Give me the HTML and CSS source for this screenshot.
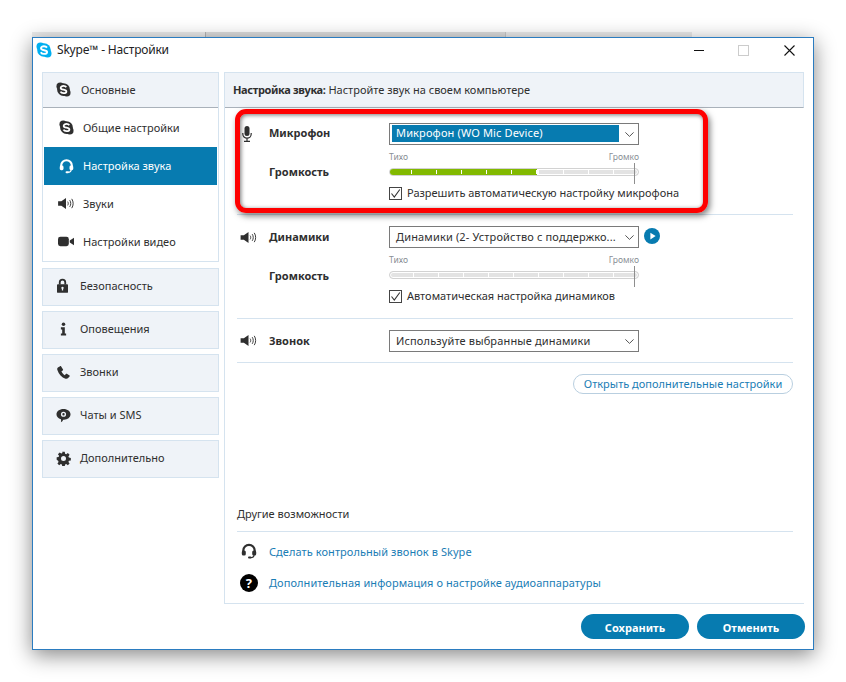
FILE: index.html
```html
<!DOCTYPE html>
<html lang="ru">
<head>
    <meta charset="UTF-8">
    <title>Skype - Настройки</title>
    <link rel="stylesheet" href="styles.css">
</head>
<body>
    <svg class="defs" width="0" height="0">
        <symbol id="i-skype" viewBox="0 0 16 16">
            <circle cx="4.5" cy="4.5" r="4"/>
            <circle cx="11.5" cy="11.5" r="4"/>
            <circle cx="8" cy="8" r="6.8"/>
            <path d="M11 5.6C10.3 4.6 9.2 4.2 8 4.2 6.4 4.2 5 5 5 6.3 5 9 11.1 7.4 11.1 10 11.1 11.2 9.700 11.900 8 11.900 6.600 11.900 5.400 11.300 4.800 10.200" fill="none" stroke="var(--s, #fff)" stroke-width="1.9"/>
        </symbol>
        <symbol id="i-headset" viewBox="0 0 16 16">
            <path d="M2.300 9.500V7.500a5.700 5.700 0 0 1 11.400 0v2" fill="none" stroke="currentColor" stroke-width="2.200"/>
            <rect x="0.800" y="7.500" width="4" height="5" rx="1.500"/>
            <rect x="11.200" y="7.500" width="4" height="5" rx="1.500"/>
            <path d="M13 12c0 1.800-1.500 2.700-3.500 2.700" fill="none" stroke="currentColor" stroke-width="1.200"/>
            <rect x="7" y="13.600" width="3.500" height="2" rx="1"/>
        </symbol>
        <symbol id="i-speaker" viewBox="0 0 17 14">
            <path d="M0 4.500h3.500L8.500 1v12L3.500 9.500H0z"/>
            <path d="M10.300 5c.8 1.200.8 2.800 0 4M12.500 3.400c1.500 2.100 1.500 5.100 0 7.200M14.700 2c2 3 2 7 0 10" fill="none" stroke="currentColor" stroke-width="1"/>
        </symbol>
        <symbol id="i-video" viewBox="0 0 17 11">
            <rect x="0" y="0.500" width="11.500" height="10" rx="2.500"/>
            <path d="M12.500 4.500 17 1.500v8l-4.500-3z"/>
        </symbol>
        <symbol id="i-lock" viewBox="0 0 12 16">
            <path d="M3 7V4.500a3 3 0 0 1 6 0V7" fill="none" stroke="currentColor" stroke-width="2"/>
            <path d="M1 6.500h10a1 1 0 0 1 1 1V15a1 1 0 0 1-1 1H1a1 1 0 0 1-1-1V7.500a1 1 0 0 1 1-1zM6 9.300a1.300 1.300 0 0 0-.7 2.400V13.500h1.400v-1.800A1.300 1.300 0 0 0 6 9.300z" fill-rule="evenodd"/>
        </symbol>
        <symbol id="i-info" viewBox="0 0 8 15">
            <circle cx="4" cy="2" r="2"/>
            <path d="M1 5.500h4.500V12.500H7V15H1v-2.500h1.500V8H1z"/>
        </symbol>
        <symbol id="i-phone" viewBox="0 0 14 14">
            <path d="M3.300.3 1 1.600C.2 2.200.1 3.300.4 4.300c1.500 4.700 4.600 8 8.800 9.300 1 .3 2 .2 2.800-.6l1.700-1.900c.3-.4.200-.8-.2-1L10.600 8.400c-.4-.2-.8-.2-1.100.2L8.400 9.900c-1.500-.7-3-2.500-3.600-4.200l1.400-.9c.4-.3.5-.7.300-1.100L4.500.6C4.200.1 3.700 0 3.300.3z"/>
        </symbol>
        <symbol id="i-chat" viewBox="0 0 16 16">
            <path d="M8 1c4.300 0 7.500 2.500 7.500 5.700 0 3.300-3.200 5.800-7 5.800-.3 0-.5 0-.8 0-.4 1-1.200 2-2.500 2.800.3-1 .3-2 .1-3.200C2.300 11.200.5 9.200.5 6.700.5 3.500 3.700 1 8 1z"/>
            <circle cx="8" cy="6.700" r="2" fill="none" stroke="#eff3f8" stroke-width="1.500"/>
        </symbol>
        <symbol id="i-gear" viewBox="-1 -1 18 18">
            <path d="M6.500 0h3l.4 2.300 1.400.6 1.900-1.400 2.100 2.100-1.400 1.900.6 1.400 2.300.4v3l-2.300.4-.6 1.400 1.400 1.900-2.100 2.100-1.900-1.400-1.400.6-.4 2.300h-3l-.4-2.300-1.400-.6-1.900 1.400-2.100-2.100 1.400-1.900-.6-1.400L-.2 9.500v-3l2.300-.4.6-1.400L1.300 2.800l2.100-2.100 1.900 1.400 1.400-.6zM8 5a3 3 0 1 0 0 6 3 3 0 0 0 0-6z" fill-rule="evenodd"/>
        </symbol>
        <symbol id="i-mic" viewBox="0 0 10 16">
            <rect x="2.500" y="0" width="5" height="10" rx="2.500"/>
            <path d="M.8 7v1a4.200 4.200 0 0 0 8.400 0V7M5 12.500V15M2 15.300h6" fill="none" stroke="currentColor" stroke-width="1.200"/>
        </symbol>
        <symbol id="i-chevron" viewBox="0 0 9 5">
            <path d="M.4.400 4.500 4.400 8.600.400" fill="none" stroke="currentColor" stroke-width="1"/>
        </symbol>
        <symbol id="i-check" viewBox="0 0 11 11">
            <path d="M1.500 5.500 4.300 9 9.800 1.500" fill="none" stroke="currentColor" stroke-width="1.100"/>
        </symbol>
    </svg>

    <div class="back-windows">
        <span class="back-a"></span>
        <span class="back-b"></span>
        <span class="back-c"></span>
    </div>

    <div class="window">
        <div class="titlebar">
            <svg class="title-logo"><use href="#i-skype"/></svg>
            <span class="title-text">Skype™ - Настройки</span>
            <div class="win-controls">
                <span class="win-min"></span>
                <span class="win-max"></span>
                <svg class="win-close" viewBox="0 0 11 11"><path d="M.5.500l10 10M10.500.500l-10 10" stroke="#111" stroke-width="1.100"/></svg>
            </div>
        </div>

        <div class="main">
            <div class="sidebar">
                <div class="group open">
                    <div class="group-head">
                        <svg class="icon ic-skype"><use href="#i-skype"/></svg>
                        <span>Основные</span>
                    </div>
                    <div class="sub"><svg class="icon ic-skype"><use href="#i-skype"/></svg><span>Общие настройки</span></div>
                    <div class="sub active"><svg class="icon ic-headset"><use href="#i-headset"/></svg><span>Настройка звука</span></div>
                    <div class="sub"><svg class="icon ic-speaker"><use href="#i-speaker"/></svg><span>Звуки</span></div>
                    <div class="sub"><svg class="icon ic-video"><use href="#i-video"/></svg><span>Настройки видео</span></div>
                </div>
                <div class="group-head closed"><svg class="icon ic-lock"><use href="#i-lock"/></svg><span>Безопасность</span></div>
                <div class="group-head closed"><svg class="icon ic-info"><use href="#i-info"/></svg><span>Оповещения</span></div>
                <div class="group-head closed"><svg class="icon ic-phone"><use href="#i-phone"/></svg><span>Звонки</span></div>
                <div class="group-head closed"><svg class="icon ic-chat"><use href="#i-chat"/></svg><span>Чаты и SMS</span></div>
                <div class="group-head closed"><svg class="icon ic-gear"><use href="#i-gear"/></svg><span>Дополнительно</span></div>
            </div>

            <div class="panel">
                <div class="panel-head"><b>Настройка звука:</b> Настройте звук на своем компьютере</div>
                <div class="panel-body">
                    <div class="section section-mic">
                        <svg class="row-icon ic-mic"><use href="#i-mic"/></svg>
                        <b class="row-label">Микрофон</b>
                        <div class="select"><span class="select-value selected">Микрофон (WO Mic Device)</span><svg class="chevron"><use href="#i-chevron"/></svg></div>
                        <b class="row-label vol-label">Громкость</b>
                        <div class="volume">
                            <div class="scale"><span>Тихо</span><span>Громко</span></div>
                            <div class="track">
                                <div class="fill level-mic"></div>
                                <div class="marker"></div>
                            </div>
                            <label class="check"><span class="box"><svg><use href="#i-check"/></svg></span>Разрешить автоматическую настройку микрофона</label>
                        </div>
                    </div>

                    <div class="section section-spk">
                        <svg class="row-icon ic-speaker"><use href="#i-speaker"/></svg>
                        <b class="row-label">Динамики</b>
                        <div class="select"><span class="select-value">Динамики (2- Устройство с поддержко...</span><svg class="chevron"><use href="#i-chevron"/></svg>
                            <span class="play"><svg viewBox="0 0 8 10"><path d="M.5.500 7.500 5l-7 4.500z" fill="#fff"/></svg></span>
                        </div>
                        <b class="row-label vol-label">Громкость</b>
                        <div class="volume">
                            <div class="scale"><span>Тихо</span><span>Громко</span></div>
                            <div class="track"><div class="marker"></div></div>
                            <label class="check"><span class="box"><svg><use href="#i-check"/></svg></span>Автоматическая настройка динамиков</label>
                        </div>
                    </div>

                    <div class="section section-ring">
                        <svg class="row-icon ic-speaker"><use href="#i-speaker"/></svg>
                        <b class="row-label">Звонок</b>
                        <div class="select"><span class="select-value">Используйте выбранные динамики</span><svg class="chevron"><use href="#i-chevron"/></svg></div>
                    </div>

                    <div class="more-row"><a class="pill">Открыть дополнительные настройки</a></div>

                    <div class="other-title">Другие возможности</div>
                    <div class="other-links">
                        <a class="other-link"><svg class="link-icon"><use href="#i-headset"/></svg>Сделать контрольный звонок в Skype</a>
                        <a class="other-link"><span class="help">?</span>Дополнительная информация о настройке аудиоаппаратуры</a>
                    </div>
                </div>
            </div>
        </div>

        <div class="footer">
            <button>Сохранить</button>
            <button>Отменить</button>
        </div>

        <div class="callout"></div>
    </div>
</body>
</html>
```

FILE: styles.css
```css
html, body {
    margin: 0;
    padding: 0;
    height: 682px;
    overflow: hidden;
    background-color: #fff;
}

body {
    padding: 32px 0 0 32px;
    box-sizing: border-box;
    font-family: "Noto Sans", sans-serif;
    font-size: 11px;
    color: #2f2f2f;
}

.defs {
    display: block;
    height: 0;
}

.back-windows {
    display: flex;
    height: 5px;
    width: 782px;
}

.back-windows span {
    background-color: #ececec;
}

.back-a { width: 173px; border-right: 1px solid #b5b5b5; }
.back-b { width: 299px; border-right: 1px solid #c9c9c9; }
.back-windows .back-b { background-color: #dedede; }
.back-c { width: 186px; }

.window {
    position: relative;
    width: 782px;
    height: 613px;
    box-sizing: border-box;
    background-color: #fff;
    border: 1px solid #2b7cc0;
    box-shadow: 0 5px 20px rgba(0, 0, 0, 0.48);
}

/* title bar */
.titlebar {
    display: flex;
    align-items: center;
    height: 24px;
    padding-left: 3px;
}

.title-logo {
    width: 16px;
    height: 16px;
    fill: #00aff0;
}

.title-text {
    margin-left: 5px;
    padding-bottom: 2px;
    font-size: 12px;
    letter-spacing: -0.2px;
    color: #222;
}

.win-controls {
    display: flex;
    align-items: center;
    margin-left: auto;
    padding-right: 18px;
}

.win-min {
    width: 10px;
    height: 1px;
    background-color: #111;
    margin-right: 34px;
}

.win-max {
    width: 9px;
    height: 9px;
    border: 1px solid #ccc;
    margin-right: 35px;
}

.win-close {
    width: 11px;
    height: 11px;
}

.main {
    display: flex;
    padding: 10px 9px 0 9px;
    height: 533px;
}

/* left menu */
.sidebar {
    width: 177px;
    margin-right: 5px;
    flex-shrink: 0;
}

.group {
    border: 1px solid #d5e3ef;
    border-top: none;
    box-sizing: border-box;
    height: 190px;
    margin-bottom: 6px;
}

.group-head {
    display: flex;
    align-items: center;
    height: 36px;
    box-sizing: border-box;
    background-color: #eff3f8;
    position: relative;
    padding: 0 0 2px 38px;
}

.group.open .group-head {
    border-top: 1px solid #d5e3ef;
    border-bottom: 1px solid #a9b1ba;
}

.group-head.closed {
    height: 38px;
    border: 1px solid #d5e3ef;
    margin-bottom: 5px;
    padding: 0 0 4px 37px;
}

.sub {
    display: flex;
    align-items: center;
    position: relative;
    height: 38px;
    margin: 0 1px;
    padding: 0 0 2px 39px;
    box-sizing: border-box;
}

.group.open .group-head + .sub {
    margin-top: 1px;
}

.sub.active {
    background-color: #077bb0;
    color: #fff;
    fill: #fff;
}

.icon {
    position: absolute;
    top: 50%;
    fill: currentColor;
}

.ic-skype { width: 15px; height: 15px; left: 13px; margin-top: -8px; fill: #2f2f2f; }
.sub .ic-skype { left: 15px; }
.sub.active .icon { color: #fff; }
.sub .ic-headset { width: 15px; height: 16px; left: 15px; margin-top: -8px; }
.sub .ic-speaker { width: 16px; height: 13px; left: 14px; margin-top: -7px; }
.sub .ic-video { width: 16px; height: 11px; left: 14px; margin-top: -6px; }
.ic-lock { width: 11px; height: 15px; left: 14px; margin-top: -9px; }
.ic-info { width: 7px; height: 14px; left: 17px; margin-top: -8px; }
.ic-phone { width: 13px; height: 13px; left: 14px; margin-top: -7px; }
.ic-chat { width: 15px; height: 15px; left: 13px; margin-top: -8px; }
.ic-gear { width: 15px; height: 15px; left: 13px; margin-top: -8px; }

/* right panel */
.panel {
    flex: 1;
    border-left: 1px solid #d5e3ef;
    border-bottom: 1px solid #d5e3ef;
    height: 532px;
    box-sizing: border-box;
}

.panel-head {
    height: 36px;
    box-sizing: border-box;
    background-color: #eff3f8;
    border-top: 1px solid #d5e3ef;
    border-right: 1px solid #d5e3ef;
    border-bottom: 1px solid #a9b1ba;
    padding: 9px 0 0 8px;
}

.panel-head b {
    letter-spacing: -0.35px;
}

.panel-body {
    padding: 0 11px 0 12px;
}

.section {
    display: grid;
    grid-template-columns: 32px 120px 250px;
    align-items: center;
    border-bottom: 1px solid #d5e3ef;
    box-sizing: border-box;
}

.section-mic { height: 107px; padding-top: 15px; align-content: start; }
.section-spk { height: 104px; padding-top: 11px; align-content: start; }
.section-ring { height: 44px; }

.row-icon {
    fill: currentColor;
    justify-self: start;
}

.row-icon.ic-mic { width: 10px; height: 16px; margin-left: 5px; }
.row-icon.ic-speaker { width: 17px; height: 13px; margin-left: 3px; }

.row-label {
    padding-bottom: 2px;
}

.section-mic .row-label:not(.vol-label) {
    padding-bottom: 4px;
}

.section-ring .row-label {
    padding-bottom: 0;
}

.vol-label {
    grid-column: 1 / 3;
    align-self: start;
    margin: 19px 0 0 32px;
}

.section-spk .vol-label {
    margin-top: 20px;
}

.select {
    position: relative;
    display: flex;
    align-items: center;
    height: 22px;
    box-sizing: border-box;
    border: 1px solid #7a7a7a;
    padding: 0 2px 1px;
}

.select-value {
    flex: 1;
    padding-left: 4px;
    letter-spacing: 0.15px;
    white-space: nowrap;
}

.select-value.selected {
    background-color: #077bb0;
    color: #fff;
    line-height: 15px;
    margin-right: 18px;
    flex: none;
    width: 223px;
    padding-bottom: 2px;
}

.chevron {
    position: absolute;
    right: 4px;
    top: 8px;
    width: 9px;
    height: 5px;
    color: #555;
}

.play {
    position: absolute;
    left: 254px;
    top: 1px;
    width: 16px;
    height: 16px;
    border-radius: 50%;
    background-color: #077bb0;
    display: flex;
    align-items: center;
    justify-content: center;
}

.play svg {
    width: 6px;
    height: 8px;
    margin-left: 1px;
}

.volume {
    display: flex;
    flex-direction: column;
}

.scale {
    display: flex;
    justify-content: space-between;
    font-size: 8.5px;
    line-height: 11px;
    color: #8a8f96;
    margin-top: 6px;
}

.track {
    position: relative;
    height: 8px;
    margin-top: 6px;
    box-sizing: border-box;
    border: 1px solid #d2d2d2;
    border-radius: 4px;
    background-color: #e3e3e3;
    background-image: repeating-linear-gradient(90deg, transparent 0, transparent 23px, #fff 23px, #fff 24px, transparent 24px, transparent 25px);
    box-shadow: inset 0 0 0 1px #fff;
}

.fill {
    height: 100%;
    border-radius: 3px 0 0 3px;
    background-color: #82b900;
    background-image: repeating-linear-gradient(90deg, transparent 0, transparent 21px, #fff 21px, #fff 22px, transparent 22px, transparent 25px);
    background-size: 100% 4px;
    background-repeat: repeat-x;
    background-position: 0 1px;
    border-right: 2px solid #fff;
}

.level-mic {
    width: 147px;
}

.marker {
    position: absolute;
    left: 244px;
    top: -6px;
    width: 1px;
    height: 21px;
    background-color: #8e8e8e;
}

.check {
    display: flex;
    align-items: flex-start;
    margin-top: 11px;
    line-height: 11px;
    white-space: nowrap;
}

.box {
    width: 13px;
    height: 13px;
    box-sizing: border-box;
    border: 1px solid #444;
    margin-right: 5px;
    color: #333;
    flex-shrink: 0;
}

.box svg {
    display: block;
    width: 11px;
    height: 11px;
}

.more-row {
    display: flex;
    justify-content: flex-end;
    padding-top: 11px;
}

.pill {
    box-sizing: border-box;
    width: 220px;
    height: 20px;
    line-height: 18px;
    text-align: center;
    border: 1px solid #b9cfe0;
    border-radius: 10px;
    color: #1a7db5;
}

.other-title {
    margin-top: 112px;
    height: 25px;
    border-bottom: 1px solid #d5e3ef;
}

.other-links {
    display: flex;
    flex-direction: column;
    gap: 11px;
    padding-top: 9px;
}

.other-link {
    display: flex;
    align-items: center;
    height: 20px;
    color: #1a7db5;
    letter-spacing: 0.07px;
}

.link-icon {
    width: 16px;
    height: 16px;
    margin: 0 12px 0 4px;
    fill: currentColor;
    color: #2f2f2f;
}

.help {
    width: 18px;
    height: 18px;
    margin: 1px 11px 0 3px;
    border-radius: 50%;
    background-color: #000;
    color: #fff;
    font-size: 13px;
    font-weight: 700;
    text-align: center;
    line-height: 18px;
}

.footer {
    display: flex;
    justify-content: flex-end;
    gap: 8px;
    padding: 9px 8px 0 0;
}

button {
    width: 108px;
    height: 25px;
    padding: 1px 0 0;
    border: none;
    border-radius: 13px;
    background-color: #077bb0;
    color: #fff;
    font-family: "Noto Sans", sans-serif;
    font-size: 11px;
    font-weight: 700;
}

/* red annotation drawn over the screenshot */
.callout {
    position: absolute;
    left: 202px;
    top: 71px;
    width: 463px;
    height: 94px;
    border: 5px solid #fe0000;
    border-radius: 11px;
    box-shadow: 2px 3px 6px rgba(0, 0, 0, 0.5), inset 1px 1px 4px rgba(0, 0, 0, 0.55);
    pointer-events: none;
}
```
